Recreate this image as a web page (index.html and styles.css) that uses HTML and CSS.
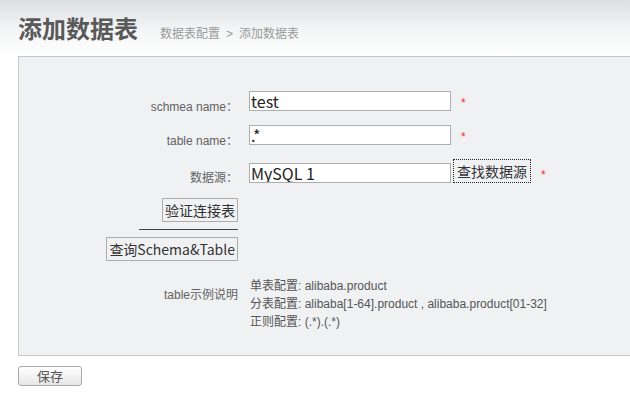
FILE: index.html
```html
<!DOCTYPE html>
<html lang="zh">
<head>
<meta charset="utf-8">
<title>添加数据表</title>
<link rel="stylesheet" href="styles.css">
</head>
<body>
<div class="header">
  <h1 class="title">添加数据表</h1>
  <span class="crumb">数据表配置<span class="sep">&gt;</span>添加数据表</span>
</div>
<div class="panel">
  <div class="row r1">
    <div class="label">schmea name：</div>
    <div class="field">
      <input class="text" type="text" value="test">
      <span class="req">*</span>
    </div>
  </div>
  <div class="row r2">
    <div class="label">table name：</div>
    <div class="field">
      <input class="text" type="text" value=".*">
      <span class="req">*</span>
    </div>
  </div>
  <div class="row r3">
    <div class="label lbl3">数据源：</div>
    <div class="field">
      <input class="text" type="text" value="MySQL 1">
      <button class="btn focus">查找数据源</button>
      <span class="req req3">*</span>
    </div>
  </div>
  <div class="row r4">
    <div class="actions">
      <button class="btn">验证连接表</button>
      <div class="rule"></div>
      <button class="btn">查询Schema&amp;Table</button>
    </div>
  </div>
  <div class="row r6">
    <div class="label lbl6">table示例说明</div>
    <div class="examples">
      <div>单表配置: alibaba.product</div>
      <div>分表配置: alibaba[1-64].product , alibaba.product[01-32]</div>
      <div>正则配置: (.*).(.*)</div>
    </div>
  </div>
</div>
<div class="footer">
  <button class="save">保存</button>
</div>
</body>
</html>
```
FILE: styles.css
```css
html, body {
  margin: 0;
  padding: 0;
  overflow: hidden;
  background: #fff;
  font-family: "Liberation Sans", "Noto Sans CJK SC", sans-serif;
}
.header {
  height: 56px;
  box-sizing: border-box;
  padding: 12px 0 0 18px;
  display: flex;
  align-items: baseline;
  background: linear-gradient(#dcdee1 0px, #f4f5f6 30px, #ffffff 56px);
}
.title {
  margin: 0;
  font-family: "Noto Sans CJK SC", sans-serif;
  font-size: 24px;
  line-height: 32px;
  font-weight: bold;
  color: #595959;
}
.crumb {
  margin-left: 22px;
  font-family: "Noto Sans CJK SC", sans-serif;
  font-size: 12px;
  color: #9a9a9a;
}
.sep {
  font-family: "Liberation Sans", sans-serif;
  margin: 0 6px;
}
.panel {
  margin-left: 18px;
  width: 640px;
  border: 1px solid #c8c8c8;
  background: #f0f1f3;
  padding-top: 34px;
  box-sizing: border-box;
  height: 300px;
}
.row {
  display: flex;
  align-items: flex-start;
}
.label {
  width: 219px;
  flex: none;
  text-align: right;
  font-size: 12px;
  line-height: 14px;
  color: #626262;
  padding-top: 9px;
  margin-right: 11px;
}
.field {
  display: flex;
  align-items: flex-end;
}
.text {
  width: 202px;
  height: 20px;
  box-sizing: border-box;
  border: 1px solid #aeaeae;
  background: #fff;
  margin: 0;
  padding: 0 1px;
  font-family: "Noto Sans CJK SC", sans-serif;
  font-size: 16px;
  line-height: 18px;
  color: #222;
  outline: none;
}
.req {
  color: #ff2a2a;
  font-size: 12px;
  line-height: 14px;
  margin-left: 10px;
  align-self: flex-start;
  padding-top: 5px;
}
.r1, .r2 { height: 20px; }
.r2 { margin-top: 14px; }
.r3 { margin-top: 14px; height: 24px; }
.lbl3 { padding-top: 12px; }
.req3 { padding-top: 9px; margin-left: 10px; }
.btn {
  margin: 0;
  height: 24px;
  box-sizing: border-box;
  padding: 0 2px;
  border: 1px solid #acacac;
  background: transparent;
  font-family: "Noto Sans CJK SC", sans-serif;
  font-size: 14px;
  line-height: 20px;
  color: #333;
  border-radius: 0;
}
.field .btn { margin-left: 2px; }
.focus { border: 1px dotted #222; padding: 0 3px; }
.r4 { margin-top: 15px; }
.actions {
  width: 219px;
  display: flex;
  flex-direction: column;
  align-items: flex-end;
}
.rule {
  width: 99px;
  height: 1px;
  background: #444;
  margin: 7px 0 7px;
}
.r6 { margin-top: 16px; }
.lbl6 { padding-top: 11px; }
.examples {
  font-size: 12px;
  line-height: 18px;
  color: #555;
  margin-left: 1px;
}
.footer {
  padding: 10px 0 0 18px;
}
.save {
  width: 64px;
  height: 20px;
  margin: 0;
  padding: 0;
  border: 1px solid #a8a8a8;
  border-radius: 3px;
  background: linear-gradient(#ffffff, #e6e6e6);
  font-family: "Noto Sans CJK SC", sans-serif;
  font-size: 13px;
  line-height: 18px;
  color: #555;
}
```
